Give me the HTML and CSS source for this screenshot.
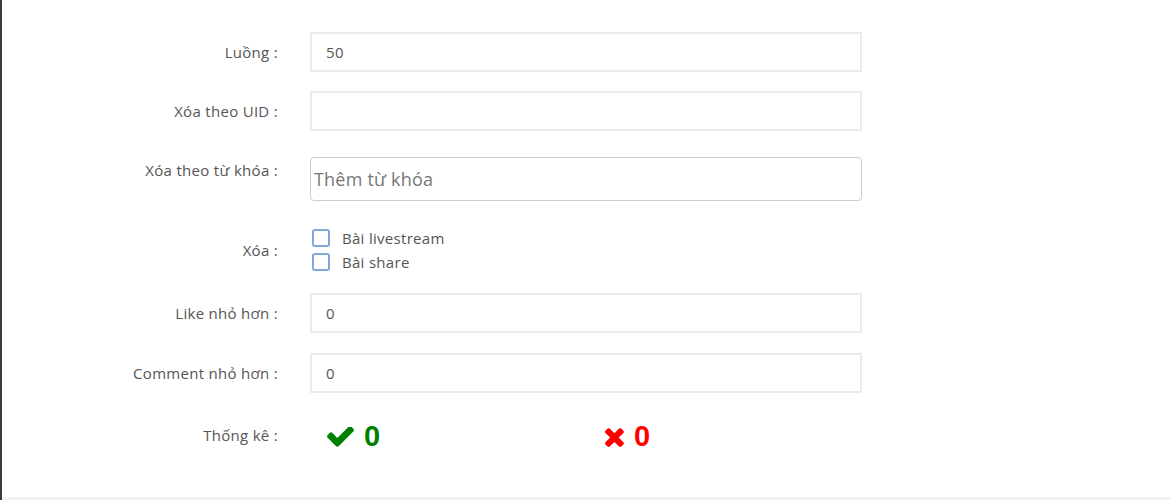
FILE: index.html
```html
<!DOCTYPE html>
<html lang="vi">
<head>
<meta charset="utf-8">
<title>Form</title>
<link rel="stylesheet" href="styles.css">
</head>
<body>
<div class="edge"></div>
<div class="main">
  <div class="panel">
    <div class="row r1">
      <label class="lbl">Luồng :</label>
      <div class="field"><input class="inp" type="text" value="50"></div>
    </div>
    <div class="row r2">
      <label class="lbl">Xóa theo UID :</label>
      <div class="field"><input class="inp" type="text" value=""></div>
    </div>
    <div class="row r3 top">
      <label class="lbl lbl-top">Xóa theo từ khóa :</label>
      <div class="field"><input class="tags" type="text" placeholder="Thêm từ khóa"></div>
    </div>
    <div class="row r4">
      <label class="lbl">Xóa :</label>
      <div class="field checks">
        <label class="chk"><span class="box"></span>Bài livestream</label>
        <label class="chk"><span class="box"></span>Bài share</label>
      </div>
    </div>
    <div class="row r5">
      <label class="lbl">Like nhỏ hơn :</label>
      <div class="field"><input class="inp" type="text" value="0"></div>
    </div>
    <div class="row r6">
      <label class="lbl">Comment nhỏ hơn :</label>
      <div class="field"><input class="inp" type="text" value="0"></div>
    </div>
    <div class="row r7">
      <label class="lbl">Thống kê :</label>
      <div class="field stats">
        <span class="stat ok">
          <svg class="ic-check" viewBox="121 402 1550 1120" aria-hidden="true"><path d="M1671 566q0 40-28 68l-724 724-136 136q-28 28-68 28t-68-28l-136-136-362-362q-28-28-28-68t28-68l136-136q28-28 68-28t68 28l294 295 656-657q28-28 68-28t68 28l136 136q28 28 28 68z"/></svg>
          <b>0</b>
        </span>
        <span class="stat bad">
          <svg class="ic-x" viewBox="186 232 1304 1322" aria-hidden="true"><path d="M1490 1322q0 40-28 68l-136 136q-28 28-68 28t-68-28l-294-294-294 294q-28 28-68 28t-68-28l-136-136q-28-28-28-68t28-68l294-294-294-294q-28-28-28-68t28-68l136-136q28-28 68-28t68 28l294 294 294-294q28-28 68-28t68 28l136 136q28 28 28 68t-28 68l-294 294 294 294q28 28 28 68z"/></svg>
          <b>0</b>
        </span>
      </div>
    </div>
  </div>
</div>
</body>
</html>
```

FILE: styles.css
```css
html, body {
  margin: 0;
  padding: 0;
  height: 100%;
}
body {
  display: flex;
  background: #f1f1f1;
  font-family: "Open Sans", "Liberation Sans", sans-serif;
  font-size: 15px;
  letter-spacing: 0.3px;
  color: #555;
  overflow: hidden;
}
.edge {
  width: 2px;
  background: #3c3c3c;
  flex: none;
}
.main {
  flex: 1;
}
.panel {
  background: #fff;
  height: 497px;
  box-sizing: border-box;
  padding-top: 32px;
}
.row {
  display: flex;
  align-items: center;
}
.row.top {
  align-items: flex-start;
}
.lbl {
  width: 276px;
  text-align: right;
  flex: none;
  margin-right: 32px;
  color: #555;
}
.lbl-top {
  padding-top: 3px;
}
.field {
  width: 552px;
}
.inp {
  display: block;
  box-sizing: border-box;
  width: 552px;
  height: 40px;
  border: 2px solid #ebebeb;
  padding: 0 14px;
  font-family: "Open Sans", "Liberation Sans", sans-serif;
  font-size: 15px;
  letter-spacing: 0.3px;
  color: #555;
  background: #fff;
  outline: none;
}
.tags {
  display: block;
  box-sizing: border-box;
  width: 552px;
  height: 44px;
  border: 1px solid #ccc;
  border-radius: 4px;
  padding: 0 3px;
  font-family: "Open Sans", "Liberation Sans", sans-serif;
  font-size: 18px;
  letter-spacing: 0.2px;
  color: #555;
  outline: none;
}
.tags::placeholder {
  color: #777;
}
.r2 { margin-top: 19px; }
.r3 { margin-top: 26px; }
.r4 { margin-top: 25px; }
.r5 { margin-top: 19px; }
.r6 { margin-top: 20px; }
.r7 { margin-top: 26px; }

.checks {
  display: flex;
  flex-direction: column;
}
.chk {
  display: flex;
  align-items: center;
  height: 24px;
  color: #555;
}
.box {
  width: 14px;
  height: 14px;
  border: 2px solid #7fa7dc;
  border-radius: 3px;
  margin-left: 2px;
  margin-right: 12px;
  background: #fff;
}
.stats {
  display: flex;
  align-items: center;
  height: 32px;
  padding-left: 17px;
  letter-spacing: 0;
}
.stat {
  display: flex;
  align-items: center;
  font-family: "Liberation Sans", Arial, sans-serif;
  font-size: 29px;
  margin-top: 3px;
}
.stat b {
  font-weight: bold;
}
.ok {
  color: #008000;
  width: 276px;
}
.bad {
  color: #ff0000;
}
.ic-check {
  width: 27px;
  height: 20px;
  fill: #008000;
  margin-right: 10px;
}
.ic-x {
  width: 21px;
  height: 21px;
  fill: #ff0000;
  margin-left: 0;
  margin-right: 10px;
}
```
